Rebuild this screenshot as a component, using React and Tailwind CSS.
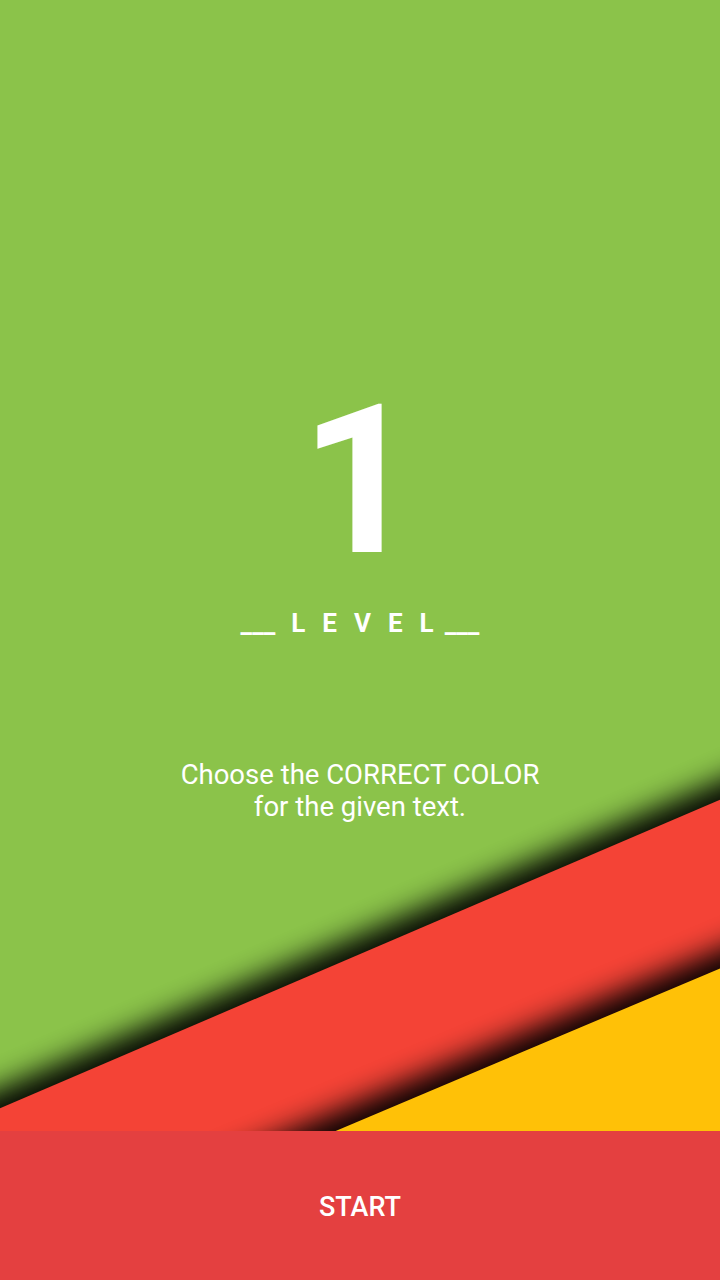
import React from "react";

const Stripes = () => {
  return (
    <svg
      className="absolute inset-0 w-full h-full"
      viewBox="0 0 720 1131"
      preserveAspectRatio="none"
    >
      <defs>
        <filter id="soft" x="-20%" y="-20%" width="140%" height="140%">
          <feGaussianBlur stdDeviation="14" />
        </filter>
      </defs>
      {/* red band shadow + fill */}
      <polygon
        points="-60,1114 780,755 780,1300 -60,1300"
        fill="#000"
        opacity="0.95"
        filter="url(#soft)"
      />
      <polygon points="-60,1134 780,774 780,1300 -60,1300" fill="#F44336" />
      {/* yellow band shadow + fill */}
      <polygon
        points="0,1253 780,924 780,1300 0,1300"
        fill="#000"
        opacity="0.95"
        filter="url(#soft)"
      />
      <polygon points="0,1273 780,943 780,1300 0,1300" fill="#FFC107" />
    </svg>
  );
};

const App = () => {
  return (
    <div
      className="flex flex-col h-[1280px] w-full overflow-hidden"
      style={{ fontFamily: "Roboto, 'Noto Sans', sans-serif" }}
    >
      <div className="relative h-[1131px] bg-[#8BC34A] overflow-hidden">
        <Stripes />
        <div className="relative flex flex-col items-center pt-[378px] text-white">
          <h1 className="text-[207px] leading-none font-bold">1</h1>
          <div className="mt-[25px] flex items-center text-[26px] leading-none font-bold">
            <span>___</span>
            <span className="ml-[16px] tracking-[17px]">LEVE</span>
            <span className="mr-[11px]">L</span>
            <span>___</span>
          </div>
          <p className="mt-[123px] text-[27.5px] leading-[32px] text-center">
            Choose the CORRECT COLOR
            <br />
            for the given text.
          </p>
        </div>
      </div>
      <button className="h-[149px] bg-[#E44040] text-white text-[27px] font-medium flex items-center justify-center pt-[3px]">
        START
      </button>
    </div>
  );
};

export default App;
